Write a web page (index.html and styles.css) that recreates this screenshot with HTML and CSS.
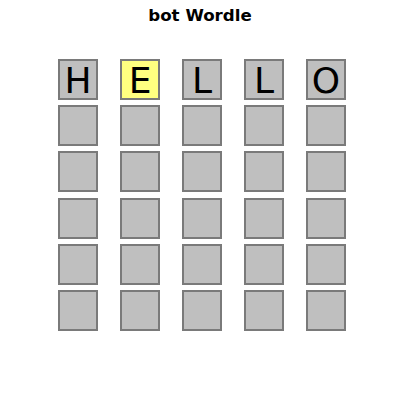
FILE: index.html
```html
<!DOCTYPE html>
<html lang="en">
<head>
    <meta charset="UTF-8">
    <title>bot Wordle</title>
    <link rel="stylesheet" href="styles.css">
</head>
<body>

<div class="figure">
    <h1 class="title">bot Wordle</h1>
    <div class="board">
        <div class="tile">H</div>
        <div class="tile present">E</div>
        <div class="tile">L</div>
        <div class="tile">L</div>
        <div class="tile">O</div>

        <div class="tile"></div>
        <div class="tile"></div>
        <div class="tile"></div>
        <div class="tile"></div>
        <div class="tile"></div>

        <div class="tile"></div>
        <div class="tile"></div>
        <div class="tile"></div>
        <div class="tile"></div>
        <div class="tile"></div>

        <div class="tile"></div>
        <div class="tile"></div>
        <div class="tile"></div>
        <div class="tile"></div>
        <div class="tile"></div>

        <div class="tile"></div>
        <div class="tile"></div>
        <div class="tile"></div>
        <div class="tile"></div>
        <div class="tile"></div>

        <div class="tile"></div>
        <div class="tile"></div>
        <div class="tile"></div>
        <div class="tile"></div>
        <div class="tile"></div>
    </div>
</div>

</body>
</html>
```

FILE: styles.css
```css
body {
    margin: 0;
    background: white;
    font-family: "DejaVu Sans", sans-serif;
}
.figure {
    width: 400px;
    height: 400px;
}
.title {
    margin: 0;
    padding-top: 6px;
    font-size: 16.67px;
    line-height: 20px;
    font-weight: bold;
    text-align: center;
    color: black;
}
.board {
    display: grid;
    grid-template-columns: repeat(5, 40px);
    grid-auto-rows: 41px;
    column-gap: 22px;
    row-gap: 5.2px;
    margin-top: 33px;
    margin-left: 58px;
}
.tile {
    box-sizing: border-box;
    display: flex;
    align-items: center;
    justify-content: center;
    padding-top: 2px;
    background: #bfbfbf;
    border: 2px solid #7a7a7a;
    font-size: 36px;
    line-height: 1;
    color: black;
}
.tile.present {
    background: #ffff80;
}
```
